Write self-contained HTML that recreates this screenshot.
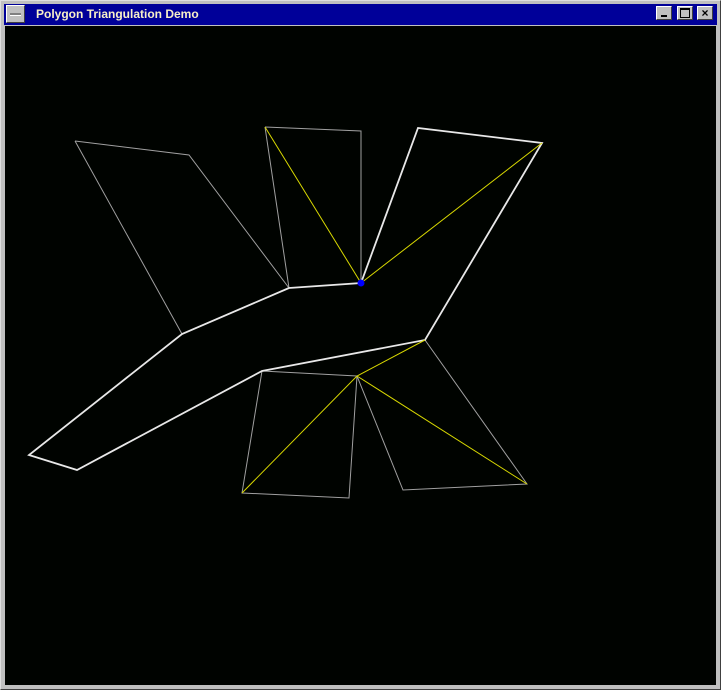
<!DOCTYPE html>
<html><head><style>
body{margin:0;width:721px;height:690px;background:#c0c0c0;overflow:hidden;position:relative;font-family:"Liberation Sans",sans-serif}
.frame{position:absolute;left:0;top:0;width:719px;height:688px;border-top:1px solid #dfdfdf;border-left:1px solid #dfdfdf;border-right:1px solid #404040;border-bottom:1px solid #404040;background:#c0c0c0}
.title{position:absolute;left:4px;top:4px;width:713px;height:21px;background:#000099}
.title span{position:absolute;left:32px;top:3px;color:#f8f0c8;font-weight:bold;font-size:12px}
.btn{position:absolute;top:6px;width:16px;height:14px;background:#c0c0c0;border-top:1px solid #fff;border-left:1px solid #fff;border-right:1px solid #404040;border-bottom:1px solid #404040;box-sizing:border-box}
.canvas{position:absolute;left:5px;top:26px;width:711px;height:659px;background:#000300}
</style></head><body>
<div class="frame"></div>
<div class="title"><span>Polygon Triangulation Demo</span></div>
<div class="btn" style="left:6px;width:19px;top:5px;height:18px"><div style="position:absolute;left:3px;top:7px;width:11px;height:2px;background:#808080;border-bottom:1px solid #fff"></div></div>
<div class="btn" style="left:656px"><div style="position:absolute;left:4px;top:8px;width:6px;height:2px;background:#000"></div></div>
<div class="btn" style="left:677px"><div style="position:absolute;left:2px;top:1px;width:8px;height:7px;border:1px solid #000;border-top-width:2px"></div></div>
<div class="btn" style="left:697px;font-size:12px;line-height:12px;text-align:center;font-weight:bold">×</div>
<div class="canvas"></div>
<svg width="721" height="690" style="position:absolute;left:0;top:0">
<g stroke="#a0a0a0" stroke-width="1" fill="none">
<path d="M75 141L189 155L289 288M75 141L182 334M265 127L361 131L361 283M265 127L289 288M262 371L357 376M262 371L242 493L349 498L357 376L403 490L527 484L425 340"/>
</g>
<g stroke="#e8e8e8" stroke-width="1.8" fill="none">
<path d="M289 288L361 283L418 128L542 143L425 340L262 371L77 470L29 455L182 334L289 288"/>
</g>
<g stroke="#d8d800" stroke-width="1" fill="none">
<path d="M265 127L361 283L542 143M242 493L357 376L425 340M357 376L527 484"/>
</g>
<circle cx="361" cy="283" r="3.5" fill="#0000ff"/>
</svg>
</body></html>
